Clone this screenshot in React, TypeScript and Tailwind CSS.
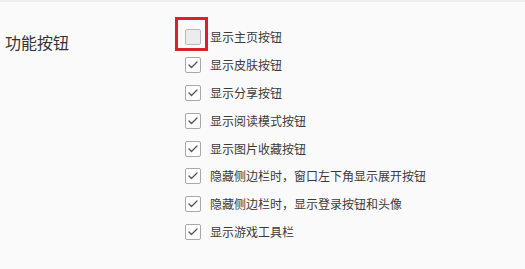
import { Check } from 'lucide-react';

const options = [
  { label: '显示主页按钮', checked: false },
  { label: '显示皮肤按钮', checked: true },
  { label: '显示分享按钮', checked: true },
  { label: '显示阅读模式按钮', checked: true },
  { label: '显示图片收藏按钮', checked: true },
  { label: '隐藏侧边栏时，窗口左下角显示展开按钮', checked: true },
  { label: '隐藏侧边栏时，显示登录按钮和头像', checked: true },
  { label: '显示游戏工具栏', checked: true },
];

export default function App() {
  return (
    <div
      className="w-[525px] h-[269px] bg-[#fafafa] border-t-2 border-[#eeeeee] overflow-hidden"
      style={{ fontFamily: '"Microsoft YaHei", "Noto Sans CJK SC", sans-serif' }}
    >
      <div className="flex pt-[21px]">
        <div className="w-[185px] pl-[5px] pt-[9px] text-[16px] leading-[20px] text-[#333333]">
          功能按钮
        </div>
        <div className="flex flex-col">
          {options.map((opt, i) => (
            <div key={opt.label} className="flex items-center h-[27.9px]">
              <div className="relative">
                <div
                  className={
                    opt.checked
                      ? 'w-4 h-4 rounded-[2px] border border-[#a8a8a8] bg-[#fdfdfd] flex items-center justify-center'
                      : 'w-4 h-4 rounded-[2px] border border-[#b8b8b8] bg-[#ececec]'
                  }
                >
                  {opt.checked && <Check className="w-[12px] h-[12px] text-[#555555]" strokeWidth={2.6} />}
                </div>
                {i === 0 && (
                  <div className="absolute -left-[10px] -top-[12px] w-[33px] h-[34px] border-[3px] border-[#d9212c]" />
                )}
              </div>
              <span className="ml-[9px] text-[12px] leading-[16px] text-[#3a3a3a]">{opt.label}</span>
            </div>
          ))}
        </div>
      </div>
    </div>
  );
}
